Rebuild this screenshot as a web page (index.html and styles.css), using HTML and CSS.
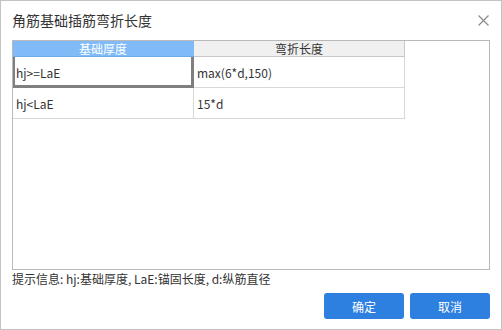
FILE: index.html
```html
<!DOCTYPE html>
<html>
<head>
<meta charset="utf-8">
<link rel="stylesheet" href="styles.css">
</head>
<body>
<div class="dialog">
  <div class="titlebar">
    <span class="title">角筋基础插筋弯折长度</span>
    <svg class="close" width="11" height="11" viewBox="0 0 11 11"><path d="M0.5 0.5L10.5 10.5M10.5 0.5L0.5 10.5" stroke="#8a8a8a" stroke-width="1.2" fill="none"/></svg>
  </div>
  <div class="box">
    <table class="grid">
      <tr class="head">
        <th class="h1">基础厚度</th>
        <th class="h2">弯折长度</th>
      </tr>
      <tr>
        <td class="sel">hj&gt;=LaE</td>
        <td>max(6*d,150)</td>
      </tr>
      <tr>
        <td>hj&lt;LaE</td>
        <td>15*d</td>
      </tr>
    </table>
  </div>
  <div class="hint">提示信息: hj:基础厚度, LaE:锚固长度, d:纵筋直径</div>
  <div class="actions">
    <button class="btn">确定</button>
    <button class="btn">取消</button>
  </div>
</div>
</body>
</html>
```
FILE: styles.css
```css
html, body {
  margin: 0;
  padding: 0;
  background: #ffffff;
}
body {
  font-family: "Noto Sans CJK SC", "Noto Sans", sans-serif;
  color: #333333;
}
.dialog {
  box-sizing: border-box;
  width: 502px;
  height: 330px;
  border: 1px solid #c3c3c3;
  padding: 0 11px 10px 11px;
  display: flex;
  flex-direction: column;
}
.titlebar {
  height: 39px;
  display: flex;
  align-items: center;
  justify-content: space-between;
}
.title {
  font-size: 14px;
  color: #333;
  margin-top: -1px;
}
.close {
  margin-right: 1px;
  margin-top: -1px;
}
.box {
  box-sizing: border-box;
  height: 230px;
  border: 1px solid #b9b9b9;
}
.grid {
  border-collapse: collapse;
  font-size: 12px;
}
.grid th {
  height: 15px;
  padding: 0;
  font-weight: normal;
  font-size: 12px;
  line-height: 15px;
  text-align: center;
  border-bottom: 1px solid #c8c8c8;
  border-right: 1px solid #c8c8c8;
}
.grid .h1 {
  width: 180px;
  background: #80bbf8;
  color: #ffffff;
  border-bottom-color: #6fa8e6;
  border-right-color: #80bbf8;
}
.grid .h2 {
  width: 210px;
  background: #f0f0f0;
  color: #333;
}
.grid td {
  height: 30px;
  padding: 0 0 0 3px;
  border-bottom: 1px solid #d8d8d8;
  border-right: 1px solid #d8d8d8;
  color: #333;
  vertical-align: middle;
}
.grid td.sel {
  box-shadow: inset 2px 0 0 #7f7f7f, inset -2px 0 0 #7f7f7f, inset 0 -2px 0 #7f7f7f;
  border-right-color: #7f7f7f;
  border-bottom-color: #7f7f7f;
}
.hint {
  font-size: 12px;
  line-height: 16px;
  margin-top: 1px;
  color: #333;
}
.actions {
  margin-top: auto;
  display: flex;
  justify-content: flex-end;
  gap: 6px;
}
.btn {
  width: 80px;
  height: 26px;
  border: none;
  border-radius: 3px;
  background: #2d80e0;
  color: #ffffff;
  font-family: "Noto Sans CJK SC", sans-serif;
  font-size: 12px;
  padding: 0;
}
```
